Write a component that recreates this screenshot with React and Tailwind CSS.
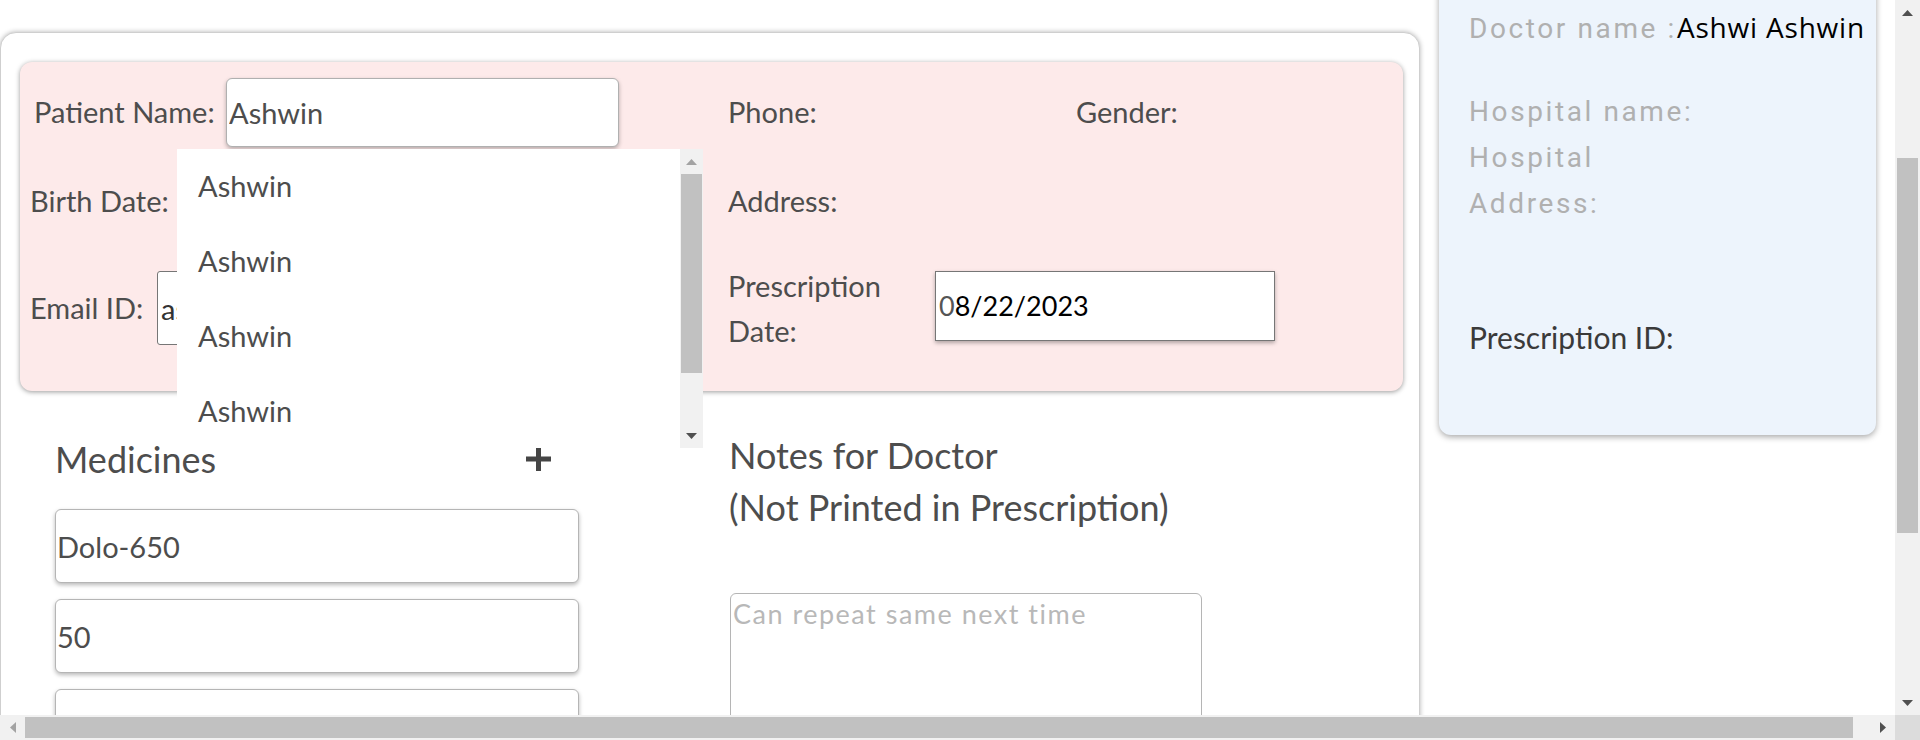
import React from "react";

function Tri({ dir = "up", color = "#505050" }) {
  const pts = {
    up: "0,6 5.5,0 11,6",
    down: "0,0 5.5,6 11,0",
    left: "6,0 0,5.5 6,11",
    right: "0,0 6,5.5 0,11",
  }[dir];
  const vertical = dir === "up" || dir === "down";
  return (
    <svg width={vertical ? 11 : 6} height={vertical ? 6 : 11} viewBox={vertical ? "0 0 11 6" : "0 0 6 11"}>
      <polygon points={pts} fill={color} />
    </svg>
  );
}

function Plus() {
  return (
    <svg width="25" height="24" viewBox="0 0 25 24" className="ml-auto">
      <rect x="0" y="9.5" width="25" height="5" fill="#454545" />
      <rect x="10" y="0" width="5" height="24" fill="#454545" />
    </svg>
  );
}

function Dropdown() {
  return (
    <div className="absolute left-[157px] top-[87px] w-[526px] h-[299px] bg-white flex overflow-hidden z-10">
      <div className="flex-1 flex flex-col">
        {[0, 1, 2, 3].map((i) => (
          <div key={i} className="h-[75px] shrink-0 flex items-center pl-[21px] text-[29px] leading-[1.2] text-[#4d4d4d]">
            Ashwin
          </div>
        ))}
      </div>
      <div className="w-[23px] bg-[#f1f1f1] flex flex-col">
        <div className="h-[25px] flex items-center justify-center">
          <Tri dir="up" color="#a3a3a3" />
        </div>
        <div className="h-[199px] mx-[1px] bg-[#c1c1c1]" />
        <div className="flex-1" />
        <div className="h-[25px] flex items-center justify-center">
          <Tri dir="down" color="#505050" />
        </div>
      </div>
    </div>
  );
}

function PinkCard() {
  return (
    <div className="relative ml-[19px] mt-[29px] w-[1383px] h-[329px] rounded-[12px] bg-[#fdeaea] shadow-[0_1px_5px_rgba(0,0,0,0.4)] pt-[16px] text-[#4d4d4d]">
      {/* Row 1 */}
      <div className="flex h-[69px]">
        <div className="w-[708px] pl-[14px] flex items-center">
          <div className="w-[192px] text-[29px] leading-[1.2] whitespace-nowrap">Patient Name:</div>
          <input
            readOnly
            value="Ashwin"
            className="w-[393px] h-[69px] bg-white border border-[#b0b0b0] rounded-[6px] shadow-[0_2px_4px_rgba(0,0,0,0.28)] pl-[2px] text-[29px] text-[#4d4d4d] outline-none font-['Lato',sans-serif]"
          />
        </div>
        <div className="flex items-center text-[29px] leading-[1.2]">
          <div className="w-[348px]">Phone:</div>
          <div>Gender:</div>
        </div>
      </div>
      {/* Row 2 */}
      <div className="flex h-[108px]">
        <div className="w-[708px] pl-[10px] flex items-center text-[29px] leading-[1.2]">Birth Date:</div>
        <div className="flex items-center text-[29px] leading-[1.2]">Address:</div>
      </div>
      {/* Row 3 */}
      <div className="flex mt-[16px] h-[74px]">
        <div className="w-[708px] pl-[10px] flex items-center">
          <div className="w-[127px] text-[29px] leading-[1.2] whitespace-nowrap">Email ID:</div>
          <input
            readOnly
            value="ashwin@gmail.com"
            className="w-[393px] h-[74px] bg-white border border-[#767676] rounded-[3px] pl-[3px] text-[29px] text-[#333] outline-none font-['Lato',sans-serif]"
          />
        </div>
        <div className="flex items-center">
          <div className="w-[207px] text-[29px] leading-[45px]">
            Prescription
            <br />
            Date:
          </div>
          <div className="self-start w-[340px] h-[70px] bg-white border border-[#767676] shadow-[0_2px_4px_rgba(0,0,0,0.3)] flex items-center pl-[3px] text-[27px] leading-[1.2]">
            <span className="text-[#555]">0</span>
            <span className="text-black">8/22/2023</span>
          </div>
        </div>
      </div>
      <Dropdown />
    </div>
  );
}

function MainCard() {
  return (
    <div className="shrink-0 w-[1420px] h-[740px] mt-[32px] rounded-[16px] border border-[#cfcfcf] shadow-[0_0_5px_rgba(0,0,0,0.3)] bg-white">
      <PinkCard />
      <div className="flex mt-[38px] text-[#4d4d4d]">
        <div className="ml-[54px] w-[674px] pt-[4px] shrink-0">
          <div className="flex items-center w-[496px] h-[52px]">
            <div className="text-[36px] leading-[52px]">Medicines</div>
            <Plus />
          </div>
          <div className="mt-[24px] flex flex-col gap-[16px]">
            {["Dolo-650", "50", ""].map((v, i) => (
              <input
                key={i}
                readOnly
                value={v}
                className="w-[524px] h-[74px] shrink-0 bg-white border border-[#b5b5b5] rounded-[6px] shadow-[0_2px_4px_rgba(0,0,0,0.28)] pl-[1px] text-[29px] text-[#4d4d4d] outline-none font-['Lato',sans-serif]"
              />
            ))}
          </div>
        </div>
        <div className="shrink-0">
          <div className="text-[36px] leading-[52px]">
            Notes for Doctor
            <br />
            (Not Printed in Prescription)
          </div>
          <textarea
            readOnly
            placeholder="Can repeat same next time"
            className="block ml-[1px] mt-[60px] w-[472px] h-[220px] resize-none bg-white border border-[#b5b5b5] rounded-[6px] pt-[4px] pl-[2px] text-[27px] leading-[1.2] tracking-[1.5px] outline-none placeholder:text-[#b8b8b8] font-['Lato',sans-serif]"
          />
        </div>
      </div>
    </div>
  );
}

function DoctorCard() {
  return (
    <div className="shrink-0 ml-[19px] w-[437px] mt-[-40px] bg-[#edf4fc] rounded-[12px] shadow-[0_2px_6px_rgba(0,0,0,0.35)] pt-[44px] pl-[30px] pb-[75px]">
      <div className="font-['Roboto',sans-serif] text-[28px] leading-[46px] tracking-[2.6px] text-[#b0b0b0] whitespace-nowrap">
        Doctor name :
        <span className="font-['Open_Sans',sans-serif] text-black tracking-[0.8px]">Ashwi Ashwin</span>
      </div>
      <div className="mt-[37px] font-['Roboto',sans-serif] text-[28px] leading-[46px] tracking-[2.6px] text-[#b0b0b0]">
        <div>Hospital name:</div>
        <div>
          Hospital
          <br />
          Address:
        </div>
      </div>
      <div className="mt-[87px] text-[30px] leading-[46px] text-[#3a3a3a]">Prescription ID:</div>
    </div>
  );
}

function VScroll() {
  return (
    <div className="w-[25px] shrink-0 bg-[#f1f1f1] flex flex-col">
      <div className="h-[25px] flex items-center justify-center">
        <Tri dir="up" />
      </div>
      <div className="mt-[133px] h-[375px] mx-[2px] bg-[#c1c1c1]" />
      <div className="flex-1" />
      <div className="h-[25px] flex items-center justify-center">
        <Tri dir="down" />
      </div>
    </div>
  );
}

function HScroll() {
  return (
    <div className="h-[25px] shrink-0 flex bg-[#f1f1f1]">
      <div className="w-[25px] flex items-center justify-center">
        <Tri dir="left" color="#a3a3a3" />
      </div>
      <div className="w-[1828px] my-[2px] bg-[#c1c1c1]" />
      <div className="flex-1" />
      <div className="w-[25px] flex items-center justify-center">
        <Tri dir="right" />
      </div>
      <div className="w-[25px] bg-[#dcdcdc]" />
    </div>
  );
}

export default function App() {
  return (
    <div className="w-[1920px] h-[740px] flex flex-col overflow-hidden bg-white font-['Lato',sans-serif]">
      <div className="flex flex-1 min-h-0">
        <div className="flex-1 min-w-0 overflow-hidden flex items-start">
          <MainCard />
          <DoctorCard />
        </div>
        <VScroll />
      </div>
      <HScroll />
    </div>
  );
}
